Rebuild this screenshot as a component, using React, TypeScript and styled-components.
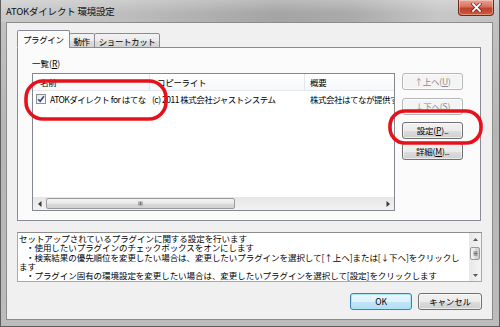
import React from 'react';
import styled, { createGlobalStyle } from 'styled-components';

const GlobalStyle = createGlobalStyle`
  html, body {
    margin: 0;
    padding: 0;
    background: #ffffff;
  }
  body {
    font-family: "Noto Sans CJK JP", "Noto Sans", sans-serif;
    font-size: 8.5px;
    color: #000000;
  }
  * {
    box-sizing: border-box;
  }
`;

const Window = styled.div`
  position: relative;
  width: 500px;
  height: 327px;
  display: flex;
  flex-direction: column;
  border: 1px solid #5e5e5e;
  border-top: none;
  background: linear-gradient(180deg, #c4c4c4 0%, #b5b5b5 40%, #bcbcbc 100%);
  overflow: hidden;
`;

const TitleBar = styled.div`
  height: 22px;
  flex: none;
  display: flex;
  align-items: flex-start;
  justify-content: space-between;
  padding: 0 5px 0 5px;
  background:
    linear-gradient(180deg, rgba(255, 255, 255, 0.25) 0%, rgba(255, 255, 255, 0) 60%),
    linear-gradient(90deg, #cacaca 0%, #bdbdbd 25%, #a4a4a4 55%, #aaaaaa 70%, #c7c7c7 88%, #c2c2c2 100%);
`;

const Title = styled.div`
  font-size: 9.5px;
  line-height: 22px;
  color: #111111;
  letter-spacing: -0.2px;
`;

const CloseButton = styled.div`
  width: 36px;
  height: 16px;
  display: flex;
  align-items: center;
  justify-content: center;
  border: 1px solid #6d2b20;
  border-top: none;
  border-radius: 0 0 4px 4px;
  background: linear-gradient(180deg, #e8a393 0%, #d9705c 45%, #c2402a 55%, #cf5a3f 100%);
  box-shadow: inset 0 0 0 1px rgba(255, 255, 255, 0.35);
`;

const Client = styled.div`
  flex: 1;
  margin: 0 6px 6px 5px;
  display: flex;
  flex-direction: column;
  padding: 7px 10px 9px 10px;
  background: #f0f0f0;
  border: 1px solid #8c8c8c;
`;

const TabStrip = styled.div`
  display: flex;
  align-items: flex-end;
  height: 18px;
  position: relative;
  z-index: 1;
  margin-bottom: -1px;
`;

const Tab = styled.div<{ $active?: boolean }>`
  height: ${p => (p.$active ? '18px' : '15px')};
  padding: 0 ${p => (p.$active ? '5px' : '4px')};
  margin-left: ${p => (p.$active ? '0' : '-1px')};
  display: flex;
  align-items: center;
  letter-spacing: -0.4px;
  border: 1px solid #898c95;
  border-bottom: ${p => (p.$active ? '1px solid #fbfbfb' : '1px solid #898c95')};
  border-radius: 2px 2px 0 0;
  background: ${p =>
    p.$active ? '#fbfbfb' : 'linear-gradient(180deg, #f3f3f3 0%, #ebebeb 50%, #dedede 51%, #d4d4d4 100%)'};
`;

const TabPanel = styled.div`
  height: 174px;
  flex: none;
  margin-right: 1px;
  display: flex;
  flex-direction: column;
  padding: 10px 17px 9px 14px;
  background: #fbfbfb;
  border: 1px solid #898c95;
`;

const GroupLabel = styled.div`
  height: 11px;
  line-height: 11px;
  margin-bottom: 4px;
`;

const ListRow = styled.div`
  flex: 1;
  display: flex;
  gap: 7px;
`;

const ListBox = styled.div`
  width: 363px;
  display: flex;
  flex-direction: column;
  background: #ffffff;
  border: 1px solid #828790;
  overflow: hidden;
`;

const ListHeader = styled.div`
  display: flex;
  height: 17px;
  flex: none;
  border-bottom: 1px solid #e4e8ed;
  background: linear-gradient(180deg, #ffffff 0%, #f7f8fa 100%);
`;

const HeaderCell = styled.div<{ $width: number; $pad: number }>`
  width: ${p => p.$width}px;
  flex: none;
  padding-left: ${p => p.$pad}px;
  line-height: 16px;
  white-space: nowrap;
  overflow: hidden;
  letter-spacing: -0.3px;
  border-right: 1px solid #e3e5e9;
`;

const ListItem = styled.div`
  display: flex;
  height: 15px;
  align-items: center;
  white-space: nowrap;
`;

const Cell = styled.div<{ $width: number; $pad: number }>`
  width: ${p => p.$width}px;
  flex: none;
  padding-left: ${p => p.$pad}px;
  display: flex;
  align-items: center;
  gap: 4px;
  overflow: hidden;
  white-space: nowrap;
  letter-spacing: -0.5px;
`;

const CheckBox = styled.span`
  width: 10px;
  height: 10px;
  flex: none;
  display: flex;
  align-items: center;
  justify-content: center;
  border: 1px solid #8e8f8f;
  background: linear-gradient(135deg, #e6e6e6 0%, #ffffff 100%);
`;

const ListSpacer = styled.div`
  flex: 1;
`;

const HScroll = styled.div`
  height: 13px;
  flex: none;
  display: flex;
  align-items: stretch;
  background: linear-gradient(180deg, #e6e6e6 0%, #f2f2f2 100%);
`;

const ScrollArrow = styled.div<{ $size: number }>`
  width: ${p => p.$size}px;
  flex: none;
  display: flex;
  align-items: center;
  justify-content: center;
`;

const HThumb = styled.div`
  width: 189px;
  margin: 1px 0;
  display: flex;
  align-items: center;
  justify-content: center;
  border: 1px solid #9a9a9a;
  border-radius: 2px;
  background: linear-gradient(180deg, #f3f3f3 0%, #e8e8e8 50%, #d9d9d9 51%, #d2d2d2 100%);
`;

const TrackFill = styled.div`
  flex: 1;
`;

const SideButtons = styled.div`
  width: 61px;
  display: flex;
  flex-direction: column;
`;

const Button = styled.button<{ $primary?: boolean; $width?: number; $top?: number }>`
  width: ${p => (p.$width ? `${p.$width}px` : '100%')};
  height: 17px;
  margin: ${p => p.$top ?? 0}px 0 0 0;
  padding: 0;
  font-family: inherit;
  font-size: 8.5px;
  line-height: 15px;
  letter-spacing: -0.2px;
  white-space: nowrap;
  color: ${p => (p.disabled ? '#8b8b8b' : '#000000')};
  border: 1px solid ${p => (p.disabled ? '#b4b8bb' : p.$primary ? '#3c7fb1' : '#707070')};
  border-radius: 3px;
  background: ${p =>
    p.disabled
      ? '#f4f4f4'
      : p.$primary
        ? 'linear-gradient(180deg, #ecf7fd 0%, #dcf1fc 50%, #c4e6f8 51%, #b3dcf3 100%)'
        : 'linear-gradient(180deg, #f2f2f2 0%, #ebebeb 50%, #dddddd 51%, #cfcfcf 100%)'};
  box-shadow: ${p => (p.$primary ? 'inset 0 0 0 1px #a8e6f8' : 'inset 0 0 0 1px rgba(255, 255, 255, 0.6)')};
  cursor: default;
`;

const DescBox = styled.div`
  height: 50px;
  flex: none;
  margin-top: 11px;
  display: flex;
  background: #ffffff;
  border: 1px solid #a9a9a9;
  border-top-color: #8c8c8c;
`;

const DescText = styled.div`
  flex: 1;
  padding: 1px 0 0 1px;
  overflow: hidden;
`;

const Line = styled.div<{ $indent?: boolean }>`
  height: 9.3px;
  line-height: 9.3px;
  white-space: nowrap;
  letter-spacing: -0.05px;
  padding-left: ${p => (p.$indent ? '7px' : '0')};
`;

const VScroll = styled.div`
  width: 12px;
  flex: none;
  display: flex;
  flex-direction: column;
  background: linear-gradient(90deg, #e8e8e8 0%, #f4f4f4 100%);
`;

const VArrow = styled.div`
  height: 12px;
  display: flex;
  align-items: center;
  justify-content: center;
`;

const VThumb = styled.div`
  height: 13px;
  margin: 2px 1px 0 1px;
  display: flex;
  align-items: center;
  justify-content: center;
  border: 1px solid #9a9a9a;
  border-radius: 2px;
  background: linear-gradient(90deg, #f3f3f3 0%, #e6e6e6 50%, #d6d6d6 51%, #cfcfcf 100%);
`;

const Footer = styled.div`
  margin-top: 11px;
  display: flex;
  justify-content: flex-end;
  gap: 6px;
`;

const Highlights = styled.svg`
  position: absolute;
  left: 0;
  top: 0;
  pointer-events: none;
`;

const Dots = styled.span`
  font-size: 7px;
  letter-spacing: -0.5px;
`;

const TriLeft = () => (
  <svg width="4" height="6" viewBox="0 0 4 6">
    <path d="M3.5 0 L0 3 L3.5 6 Z" fill="#3a3a3a" />
  </svg>
);

const TriRight = () => (
  <svg width="4" height="6" viewBox="0 0 4 6">
    <path d="M0.5 0 L4 3 L0.5 6 Z" fill="#3a3a3a" />
  </svg>
);

const TriUp = () => (
  <svg width="5" height="3" viewBox="0 0 5 3">
    <path d="M0 3 L2.5 0 L5 3 Z" fill="#5a5a5a" />
  </svg>
);

const TriDown = () => (
  <svg width="5" height="3" viewBox="0 0 5 3">
    <path d="M0 0 L2.5 3 L5 0 Z" fill="#5a5a5a" />
  </svg>
);

const GripV = () => (
  <svg width="5" height="5" viewBox="0 0 5 5">
    <path d="M1 0.5V4.5M2.5 0.5V4.5M4 0.5V4.5" stroke="#555" strokeWidth="0.8" />
  </svg>
);

const GripH = () => (
  <svg width="5" height="5" viewBox="0 0 5 5">
    <path d="M0.5 1H4.5M0.5 2.5H4.5M0.5 4H4.5" stroke="#555" strokeWidth="0.8" />
  </svg>
);

const CheckMark = () => (
  <svg width="8" height="8" viewBox="0 0 8 8">
    <path d="M1.2 4.2 L3.2 6.3 L6.9 1.2" fill="none" stroke="#2e4a8c" strokeWidth="1.6" />
  </svg>
);

const CloseGlyph = () => (
  <svg width="11" height="9" viewBox="0 0 11 9">
    <path d="M2 1 L9 8 M9 1 L2 8" stroke="#4a2a26" strokeWidth="3.2" strokeLinecap="square" />
    <path d="M2 1 L9 8 M9 1 L2 8" stroke="#ffffff" strokeWidth="1.8" strokeLinecap="square" />
  </svg>
);

const columns = [
  { header: '名前', width: 117, headPad: 7 },
  { header: 'コピーライト', width: 155, headPad: 7 },
  { header: '概要', width: 180, headPad: 5 },
];

const helpLines = [
  { text: 'セットアップされているプラグインに関する設定を行います', indent: false },
  { text: '・使用したいプラグインのチェックボックスをオンにします', indent: true },
  { text: '・検索結果の優先順位を変更したい場合は、変更したいプラグインを選択して[↑上へ]または[↓下へ]をクリックし', indent: true },
  { text: 'ます', indent: false },
  { text: '・プラグイン固有の環境設定を変更したい場合は、変更したいプラグインを選択して[設定]をクリックします', indent: true },
];

const App: React.FC = () => {
  return (
    <>
      <GlobalStyle />
      <Window>
        <TitleBar>
          <Title>ATOKダイレクト 環境設定</Title>
          <CloseButton>
            <CloseGlyph />
          </CloseButton>
        </TitleBar>

        <Client>
          <TabStrip>
            <Tab $active>プラグイン</Tab>
            <Tab>動作</Tab>
            <Tab>ショートカット</Tab>
          </TabStrip>

          <TabPanel>
            <GroupLabel>
              一覧(<u>R</u>)
            </GroupLabel>
            <ListRow>
              <ListBox>
                <ListHeader>
                  {columns.map(col => (
                    <HeaderCell key={col.header} $width={col.width} $pad={col.headPad}>
                      {col.header}
                    </HeaderCell>
                  ))}
                </ListHeader>
                <ListItem>
                  <Cell $width={117} $pad={3}>
                    <CheckBox>
                      <CheckMark />
                    </CheckBox>
                    ATOKダイレクト for はてな
                  </Cell>
                  <Cell $width={155} $pad={2}>
                    (c) 2011 株式会社ジャストシステム
                  </Cell>
                  <Cell $width={180} $pad={5}>
                    株式会社はてなが提供するサービスを検索します
                  </Cell>
                </ListItem>
                <ListSpacer />
                <HScroll>
                  <ScrollArrow $size={13}>
                    <TriLeft />
                  </ScrollArrow>
                  <HThumb>
                    <GripV />
                  </HThumb>
                  <TrackFill />
                  <ScrollArrow $size={13}>
                    <TriRight />
                  </ScrollArrow>
                </HScroll>
              </ListBox>

              <SideButtons>
                <Button disabled>
                  ↑上へ(<u>U</u>)
                </Button>
                <Button disabled $top={8}>
                  ↓下へ(<u>S</u>)
                </Button>
                <Button $top={7}>
                  設定(<u>P</u>)<Dots>...</Dots>
                </Button>
                <Button $top={4}>
                  詳細(<u>M</u>)<Dots>...</Dots>
                </Button>
              </SideButtons>
            </ListRow>
          </TabPanel>

          <DescBox>
            <DescText>
              {helpLines.map((line, i) => (
                <Line key={i} $indent={line.indent}>
                  {line.text}
                </Line>
              ))}
            </DescText>
            <VScroll>
              <VArrow>
                <TriUp />
              </VArrow>
              <VThumb>
                <GripH />
              </VThumb>
              <TrackFill />
              <VArrow>
                <TriDown />
              </VArrow>
            </VScroll>
          </DescBox>

          <Footer>
            <Button $primary $width={62}>
              OK
            </Button>
            <Button $width={64}>キャンセル</Button>
          </Footer>
        </Client>

        <Highlights width="500" height="327" viewBox="0 0 500 327">
          <rect x="25" y="81" width="140" height="38" rx="17" fill="none" stroke="#e6121b" strokeWidth="3.6" />
          <rect x="389" y="111" width="91" height="32" rx="15" fill="none" stroke="#e6121b" strokeWidth="3.6" />
        </Highlights>
      </Window>
    </>
  );
};

export default App;
